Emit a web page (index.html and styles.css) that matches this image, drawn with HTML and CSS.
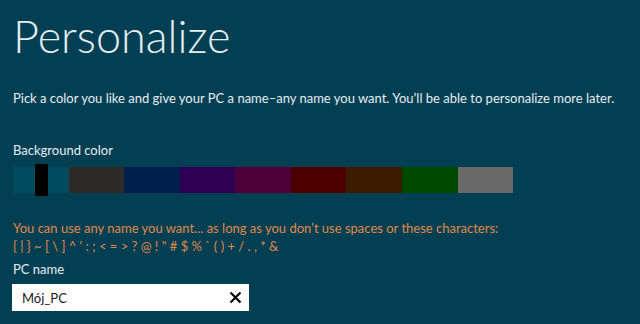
FILE: index.html
```html
<!DOCTYPE html>
<html lang="en">
<head>
<meta charset="utf-8">
<title>Personalize</title>
<link rel="stylesheet" href="styles.css">
</head>
<body>
<main class="page">
  <h1 class="title">Personalize</h1>
  <p class="intro">Pick a color you like and give your PC a name–any name you want. You’ll be able to personalize more later.</p>
  <div class="label">Background color</div>
  <div class="swatches">
    <div class="swatch sw-teal"><span class="slider"></span></div>
    <div class="swatch sw-gray"></div>
    <div class="swatch sw-navy"></div>
    <div class="swatch sw-purple"></div>
    <div class="swatch sw-plum"></div>
    <div class="swatch sw-red"></div>
    <div class="swatch sw-brown"></div>
    <div class="swatch sw-green"></div>
    <div class="swatch sw-silver"></div>
  </div>
  <p class="warning">You can use any name you want... as long as you don’t use spaces or these characters:<br>{ | } ~ [ \ ] ^ ' : ; &lt; = &gt; ? @ ! " # $ % ` ( ) + / . , * &amp;</p>
  <div class="label label-name">PC name</div>
  <div class="input">
    <span class="input-text">Mój_PC</span>
    <svg class="clear" width="13" height="13" viewBox="0 0 13 13" aria-hidden="true">
      <path d="M1.5 1.5 L11.5 11.5 M11.5 1.5 L1.5 11.5" stroke="#000" stroke-width="2.2" fill="none"/>
    </svg>
  </div>
</main>
</body>
</html>
```
FILE: styles.css
```css
html, body {
  margin: 0;
  padding: 0;
  background: #023f52;
  height: 100%;
  overflow: hidden;
}
body {
  font-family: "Segoe UI", Lato, "Open Sans", sans-serif;
  color: #e6eef2;
}
.page {
  padding: 0 0 0 13px;
}
.title {
  margin: 0;
  padding-top: 8px;
  font-size: 45px;
  line-height: 56px;
  font-weight: 300;
  white-space: nowrap;
}
.intro {
  margin: 25px 0 0 0;
  font-size: 13px;
  line-height: 18px;
  white-space: nowrap;
}
.label {
  margin-top: 34px;
  font-size: 13px;
  line-height: 18px;
}
.swatches {
  display: flex;
  margin-top: 8px;
  height: 26px;
  width: 500px;
}
.swatch {
  flex: 1 1 0;
  position: relative;
}
.slider {
  position: absolute;
  left: 22px;
  top: -3px;
  width: 13px;
  height: 32px;
  background: #000;
}
.sw-teal { background: #004b5e; }
.sw-gray { background: #2d2a2a; }
.sw-navy { background: #001e4e; }
.sw-purple { background: #2e0054; }
.sw-plum { background: #4e0038; }
.sw-red { background: #4e0000; }
.sw-brown { background: #3b1c00; }
.sw-green { background: #004a00; }
.sw-silver { background: #696969; }
.warning {
  margin: 26px 0 0 0;
  font-size: 13px;
  line-height: 18px;
  color: #e0894a;
  white-space: nowrap;
}
.label-name {
  margin-top: 5px;
}
.input {
  display: flex;
  align-items: center;
  justify-content: space-between;
  margin-top: 6px;
  margin-left: -1px;
  width: 237px;
  height: 27px;
  box-sizing: border-box;
  padding: 0 7px 0 10px;
  background: #fff;
  color: #1a1a1a;
  font-size: 13px;
}
.clear {
  display: block;
}
```
